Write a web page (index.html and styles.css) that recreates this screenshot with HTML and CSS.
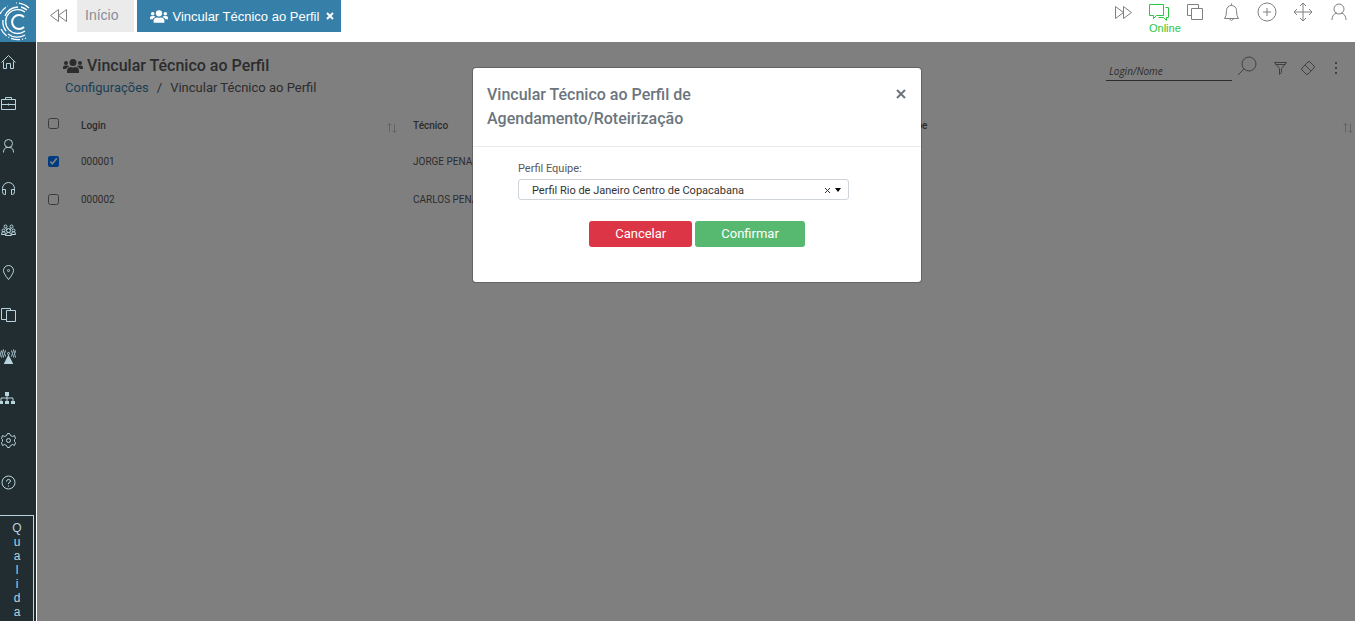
FILE: index.html
```html
<!DOCTYPE html>
<html lang="pt-BR">
<head>
    <title>Vincular Técnico ao Perfil</title>
    <meta charset="utf-8" />
    <meta name="viewport" content="width=device-width, initial-scale=1" />
    <link rel="stylesheet" href="styles.css">
</head>
<body>
<svg class="sprite" aria-hidden="true">
    <symbol id="users" viewBox="0 0 40 28">
        <circle cx="20" cy="7" r="7"/>
        <circle cx="6" cy="8" r="4"/>
        <circle cx="34" cy="8" r="4"/>
        <path d="M8 28v-4q0-8 8-8q4 2 8 0q8 0 8 8v4zM0 20v-3q0-4 4-4h4q3 0 4 2q-5 2-6 5zM40 20v-3q0-4-4-4h-4q-3 0-4 2q5 2 6 5z"/>
    </symbol>
    <symbol id="sort" viewBox="-0.5 -0.5 10 10">
        <path d="M2 9V0M0 2l2-2 2 2M7 0v9M5 7l2 2 2-2"/>
    </symbol>
</svg>

<aside class="sidebar">
    <a class="logo" href="#" aria-label="Página inicial">
        <svg viewBox="0 0 36 42">
            <path d="M24 17a7 7 0 1 0 0 10" stroke-width="2"/>
            <path d="M25 12a12 12 0 1 0 0 19" stroke-width="1.300"/>
            <path d="M18 7a15 15 0 0 0-13 9M3 20a15 15 0 0 0 3 11M8 34a15 15 0 0 0 17 1" stroke-width="1.300"/>
            <path d="M21 7a16 16 0 0 1 6 3" stroke-width="1.300"/>
            <path d="M0 14a19 19 0 0 1 8-8M1 29a19 19 0 0 0 25 9" stroke-width="1.200" stroke-dasharray="9 2 1 2"/>
            <path d="M16 3a19 19 0 0 1 13 5" stroke-width="1.200" stroke-dasharray="1 2 12 0"/>
        </svg>
    </a>
    <nav class="menu">
        <a href="#" aria-label="Início"><svg viewBox="-0.5 -0.5 16 16"><path d="M1 8l7-7 7 7M3 7v7h3v-5h4v5h3V7"/></svg></a>
        <a href="#" aria-label="Maleta"><svg viewBox="-0.5 -0.5 16 16"><path d="M1 3h14v10H1zM1 8h14M5 3V1h6v2M8 7v2"/></svg></a>
        <a href="#" aria-label="Clientes"><svg viewBox="-0.5 -0.5 16 16"><circle cx="8" cy="5" r="4"/><path d="M3 14q0-5 4-5h2q4 0 4 5"/></svg></a>
        <a href="#" aria-label="Atendimento"><svg viewBox="-0.5 -0.5 16 16"><path d="M2 11V8a6 6 0 0 1 12 0v3M2 9h3v5H4q-2 0-2-3M14 9h-3v5h1q2 0 2-3"/></svg></a>
        <a href="#" aria-label="Equipes"><svg viewBox="-0.5 -0.5 16 16"><circle cx="5" cy="4" r="1.500"/><circle cx="11" cy="4" r="1.500"/><circle cx="3" cy="8" r="1.500"/><circle cx="8" cy="8" r="2"/><circle cx="13" cy="8" r="1.500"/><path d="M1 12q0-3 2-3t2 3zM5 13q0-3 3-3t3 3zM11 12q0-3 2-3t2 3zM5 6l2 1M11 6L9 7"/></svg></a>
        <a href="#" aria-label="Mapa"><svg viewBox="-0.5 -0.5 16 16"><path d="M8 15Q3 9 3 6a5 5 0 0 1 10 0q0 3-5 9z"/><circle cx="8" cy="6" r="1"/></svg></a>
        <a href="#" aria-label="Documentos"><svg viewBox="-0.5 -0.5 16 16"><path d="M6 4h9v11H6zM6 13H1V2h9v2"/></svg></a>
        <a href="#" aria-label="Antena"><svg viewBox="-0.5 -0.5 16 16"><path class="fill" d="M8 6l5 10H3z"/><circle cx="8" cy="5" r="1"/><path d="M5 2q-2 3 0 6M3 1q-2 4 0 8M1 2q-2 4 0 7M11 2q2 3 0 6M13 1q2 4 0 8M15 2q2 4 0 7"/></svg></a>
        <a href="#" aria-label="Estrutura"><svg viewBox="0 0 16 16"><path class="fill" d="M5 2h4v4H5zM0 11h3v3H0zM5 11h4v3H5zM11 11h4v3h-4z"/><path d="M7 6v5M1 11V8h12v3"/></svg></a>
        <a href="#" aria-label="Configurações"><svg viewBox="-0.5 -0.5 16 16"><path d="M7 1h2l1 2 2 1 2-1 1 3-1 1v2l1 1-1 3-2-1-2 1-1 2H7l-1-2-2-1-2 1-1-3 1-1V7L1 6l1-3 2 1 2-1z"/><circle cx="8" cy="8" r="2"/></svg></a>
        <a href="#" aria-label="Ajuda"><svg viewBox="-0.5 -0.5 16 16"><circle cx="8" cy="8" r="6.500"/><path d="M6 7q0-2 2-2t2 1.500q0 1-2 2v1M8 11v1"/></svg></a>
    </nav>
    <a class="quality" href="#">Qualidade</a>
</aside>

<div class="page">
    <header class="topbar">
        <button class="icon-btn back" aria-label="Abas anteriores"><svg viewBox="-0.5 -0.5 20 20"><path d="M9 4v12L1 10zM17 4v12l-8-6z"/></svg></button>
        <a class="tab" href="#">Início</a>
        <div class="tab active">
            <svg class="users"><use href="#users"/></svg>
            <a href="#">Vincular Técnico ao Perfil</a>
            <button class="tab-close" aria-label="Fechar aba"><svg viewBox="0 0 8 8"><path d="M1 1l6 6M7 1L1 7"/></svg></button>
        </div>
        <div class="actions">
            <button class="icon-btn" aria-label="Próximas abas"><svg viewBox="-0.5 -0.5 20 20"><path d="M2 4v12l8-6zM10 4v12l8-6z"/></svg></button>
            <button class="icon-btn online"><svg viewBox="-0.5 -0.5 20 20"><path d="M0 2h14v11H7l-3 3v-3H0zM16 5h3v10h-2v3l-3-3H9"/></svg><span>Online</span></button>
            <button class="icon-btn" aria-label="Copiar"><svg viewBox="-0.5 -0.5 20 20"><path d="M6 6h11v11H6zM6 13H2V2h11v4"/></svg></button>
            <button class="icon-btn" aria-label="Notificações"><svg viewBox="-0.5 -0.5 20 20"><path d="M3 16q2-2 2-8a5 5 0 0 1 10 0q0 6 2 8zM8 16q2 4 4 0M10 3V1"/></svg></button>
            <button class="icon-btn" aria-label="Adicionar"><svg viewBox="0 0 20 20"><circle cx="10" cy="10" r="9"/><path d="M10 6v8M6 10h8"/></svg></button>
            <button class="icon-btn" aria-label="Mover"><svg viewBox="0 0 20 20"><path d="M10 1v18M1 10h18M7 4l3-3 3 3M7 16l3 3 3-3M4 7l-3 3 3 3M16 7l3 3-3 3"/></svg></button>
            <button class="icon-btn" aria-label="Usuário"><svg viewBox="0 0 20 20"><circle cx="10" cy="7" r="5"/><path d="M3 18q0-6 5-7M17 18q0-6-5-7"/></svg></button>
        </div>
    </header>

    <main class="content">
        <div class="heading">
            <div>
                <h1><svg class="users"><use href="#users"/></svg>Vincular Técnico ao Perfil</h1>
                <nav class="breadcrumb">
                    <a href="#">Configurações</a><span>/</span><span>Vincular Técnico ao Perfil</span>
                </nav>
            </div>
            <form class="search">
                <input type="text" placeholder="Login/Nome" aria-label="Login/Nome">
                <button class="find" type="button" aria-label="Pesquisar"><svg viewBox="0 0 20 20"><circle cx="12" cy="8" r="7"/><path d="M7 13l-6 6"/></svg></button>
                <button type="button" aria-label="Filtrar"><svg viewBox="-0.5 -0.5 16 16"><path d="M2 2h12L9 8v4l-2 2V8zM3 4h10"/></svg></button>
                <button type="button" aria-label="Limpar"><svg viewBox="0 0 16 16"><path d="M10 2l4 4q1 1 0 2l-6 6q-1 1-2 0l-4-4q-1-1 0-2l6-6q1-1 2 0zM5 5l6 6"/></svg></button>
                <button type="button" aria-label="Mais opções"><svg viewBox="0 0 16 16"><path d="M7 2h2v2H7zM7 7h2v2H7zM7 12h2v2H7z" class="fill"/></svg></button>
            </form>
        </div>

        <table class="grid">
            <colgroup><col class="c-check"><col class="c-login"><col class="c-tech"><col></colgroup>
            <thead>
                <tr>
                    <th><input type="checkbox" aria-label="Selecionar todos"></th>
                    <th><div>Login<svg><use href="#sort"/></svg></div></th>
                    <th><div>Técnico<svg><use href="#sort"/></svg></div></th>
                    <th><div>Perfil Equipe<svg><use href="#sort"/></svg></div></th>
                </tr>
            </thead>
            <tbody>
                <tr>
                    <td><input type="checkbox" aria-label="Selecionar 000001" checked></td>
                    <td>000001</td>
                    <td>JORGE PENA</td>
                    <td></td>
                </tr>
                <tr>
                    <td><input type="checkbox" aria-label="Selecionar 000002"></td>
                    <td>000002</td>
                    <td>CARLOS PENA</td>
                    <td></td>
                </tr>
            </tbody>
        </table>

        <div class="backdrop">
            <div class="modal" role="dialog" aria-labelledby="modal-title">
                <div class="modal-header">
                    <h2 id="modal-title">Vincular Técnico ao Perfil de Agendamento/Roteirização</h2>
                    <button class="close" aria-label="Fechar"><svg viewBox="0 0 12 12"><path d="M2 2l8 8M10 2l-8 8"/></svg></button>
                </div>
                <div class="modal-body">
                    <label for="perfil">Perfil Equipe:</label>
                    <div class="select">
                        <select id="perfil">
                            <option>Perfil Rio de Janeiro Centro de Copacabana</option>
                        </select>
                        <button class="clear" aria-label="Limpar seleção"><svg viewBox="0 0 8 8"><path d="M1 1l5 5M6 1L1 6"/></svg></button>
                        <span class="caret"></span>
                    </div>
                    <div class="buttons">
                        <button class="btn cancel">Cancelar</button>
                        <button class="btn confirm">Confirmar</button>
                    </div>
                </div>
            </div>
        </div>
    </main>
</div>
</body>
</html>
```
FILE: styles.css
```css
* {
    box-sizing: border-box;
}
body {
    display: flex;
    margin: 0;
    height: 100vh;
    overflow: hidden;
    font-family: Roboto, sans-serif;
    color: #58595b;
    background: white;
}
a {
    color: inherit;
    text-decoration: none;
}
button {
    padding: 0;
    border: 0;
    background: none;
    color: inherit;
    font-family: inherit;
    cursor: pointer;
}
svg {
    display: block;
    fill: none;
    stroke: currentColor;
}
.fill, .users {
    fill: currentColor;
    stroke: none;
}
.sprite {
    position: absolute;
    width: 0;
    height: 0;
}

/* sidebar */
.sidebar {
    flex: none;
    width: 36px;
    margin-right: 1px;
    overflow: hidden;
    background: #222d32;
    color: #b8d4dc;
}
.logo {
    display: block;
    height: 42px;
    background: #367fa9;
    color: white;
}
.menu {
    display: flex;
    flex-direction: column;
    gap: 26px;
    padding: 12px 0 25px;
}
.menu svg {
    width: 16px;
    height: 16px;
}
.quality {
    display: flex;
    align-items: center;
    width: 34px;
    height: 160px;
    padding-top: 5px;
    border: 1px solid #b8d4dc;
    border-left: 0;
    writing-mode: vertical-rl;
    text-orientation: upright;
    font: 12px/33px "Liberation Sans", sans-serif;
}

/* top bar */
.page {
    display: flex;
    flex-direction: column;
    flex: 1;
    min-width: 0;
}
.topbar {
    display: flex;
    align-items: flex-start;
    height: 42px;
    padding: 0 6px 0 12px;
    font-family: "Liberation Sans", sans-serif;
    color: #808080;
}
.icon-btn {
    width: 20px;
}
.icon-btn svg {
    width: 20px;
    height: 20px;
}
.back {
    margin: 5px 8px 0 0;
}
.tab {
    height: 32px;
    padding: 0 16px 0 8px;
    background: #ebebeb;
    color: #868e96;
    font-size: 14px;
    line-height: 31px;
}
.tab.active {
    display: flex;
    align-items: center;
    gap: 4px;
    margin-left: 3px;
    padding: 0 7px 0 13px;
    background: #367fa9;
    color: white;
    font-size: 13px;
}
.tab .users {
    width: 18px;
    height: 13px;
}
.tab-close {
    margin-left: 3px;
}
.tab-close svg {
    width: 8px;
    height: 8px;
    stroke-width: 2;
}
.actions {
    display: flex;
    align-items: flex-start;
    gap: 16px;
    margin: 2px 0 0 auto;
}
.online {
    color: #28c840;
    font-size: 11px;
    line-height: 12px;
    text-align: left;
}

/* content */
.content {
    position: relative;
    flex: 1;
}
.heading {
    display: flex;
    justify-content: space-between;
    padding: 14px 11px 0 26px;
}
h1 {
    display: flex;
    align-items: center;
    gap: 4px;
    margin: 0;
    font-size: 16px;
    font-weight: 500;
    line-height: 20px;
}
h1 .users {
    width: 20px;
    height: 14px;
}
.breadcrumb {
    display: flex;
    gap: 8px;
    padding: 4px 2px;
    font-size: 13px;
    line-height: 16px;
}
.breadcrumb a {
    color: #367fa9;
}
.search {
    display: flex;
    align-items: center;
    height: 24px;
    gap: 12px;
    color: #808080;
}
.search input {
    width: 126px;
    height: 20px;
    margin: 6px -7px 0 0;
    padding: 0 3px;
    border: 0;
    border-bottom: 1px solid #58595b;
    font: italic 10px "Open Sans", sans-serif;
}
.search input::placeholder {
    color: #58595b;
}
.search svg {
    width: 16px;
    height: 16px;
}
.search .find {
    margin: 0 3px 4px 0;
}
.search .find svg {
    width: 20px;
    height: 20px;
}
.grid {
    width: 100%;
    margin-top: 8px;
    border-spacing: 0;
    table-layout: fixed;
    font-size: 10px;
}
.grid th, .grid td {
    height: 38px;
    padding: 0 8px;
    text-align: left;
}
.grid th {
    height: 34px;
    font-weight: 500;
}
.grid th:last-child {
    padding-right: 2px;
}
.grid th div {
    display: flex;
    align-items: center;
    justify-content: space-between;
}
.grid th svg {
    width: 10px;
    height: 10px;
    margin-top: 6px;
    color: #c8c8c8;
}
.c-check {
    width: 36px;
}
.c-login {
    width: 332px;
}
.c-tech {
    width: 458px;
}
.grid input {
    display: block;
    width: 11px;
    height: 11px;
    margin: 0 3px;
}
.grid th input {
    margin-bottom: 4px;
}

/* modal */
.backdrop {
    position: absolute;
    inset: 0;
    display: flex;
    justify-content: center;
    align-items: flex-start;
    padding: 25px 0 0 2px;
    background: rgba(0, 0, 0, 0.5);
}
.modal {
    width: 450px;
    background: white;
    background-clip: padding-box;
    border: 1px solid rgba(0, 0, 0, 0.2);
    border-radius: 4px;
}
.modal-header {
    display: flex;
    justify-content: space-between;
    align-items: flex-start;
    padding: 15px 14px;
    border-bottom: 1px solid #e9ecef;
    color: #6c757d;
}
h2 {
    width: 240px;
    margin: 0;
    font-size: 16px;
    font-weight: 500;
    line-height: 24px;
}
.close svg {
    width: 12px;
    height: 12px;
    margin-top: 5px;
    stroke-width: 2;
}
.modal-body {
    padding: 15px 72px 35px 45px;
    font-size: 11px;
}
.modal-body label {
    display: block;
    line-height: 14px;
}
.select {
    position: relative;
    margin-top: 3px;
}
.select select {
    display: block;
    width: 100%;
    height: 21px;
    padding: 1px 36px 0 13px;
    appearance: none;
    border: 1px solid #ced4da;
    border-radius: 3px;
    background: white;
    color: #333;
    font: 11px Roboto, sans-serif;
}
.clear {
    position: absolute;
    top: 8px;
    right: 17px;
    color: #333;
}
.clear svg {
    width: 8px;
    height: 8px;
}
.caret {
    position: absolute;
    top: 9px;
    right: 8px;
    border: 3px solid transparent;
    border-top: 4px solid black;
    border-bottom: 0;
}
.buttons {
    display: flex;
    justify-content: center;
    gap: 3px;
    margin: 21px -27px 0 0;
}
.btn {
    height: 26px;
    padding: 0 26px 2px;
    border-radius: 3px;
    color: white;
    font-size: 13px;
}
.cancel {
    background: #dc3545;
}
.confirm {
    background: #57b96f;
}
```
